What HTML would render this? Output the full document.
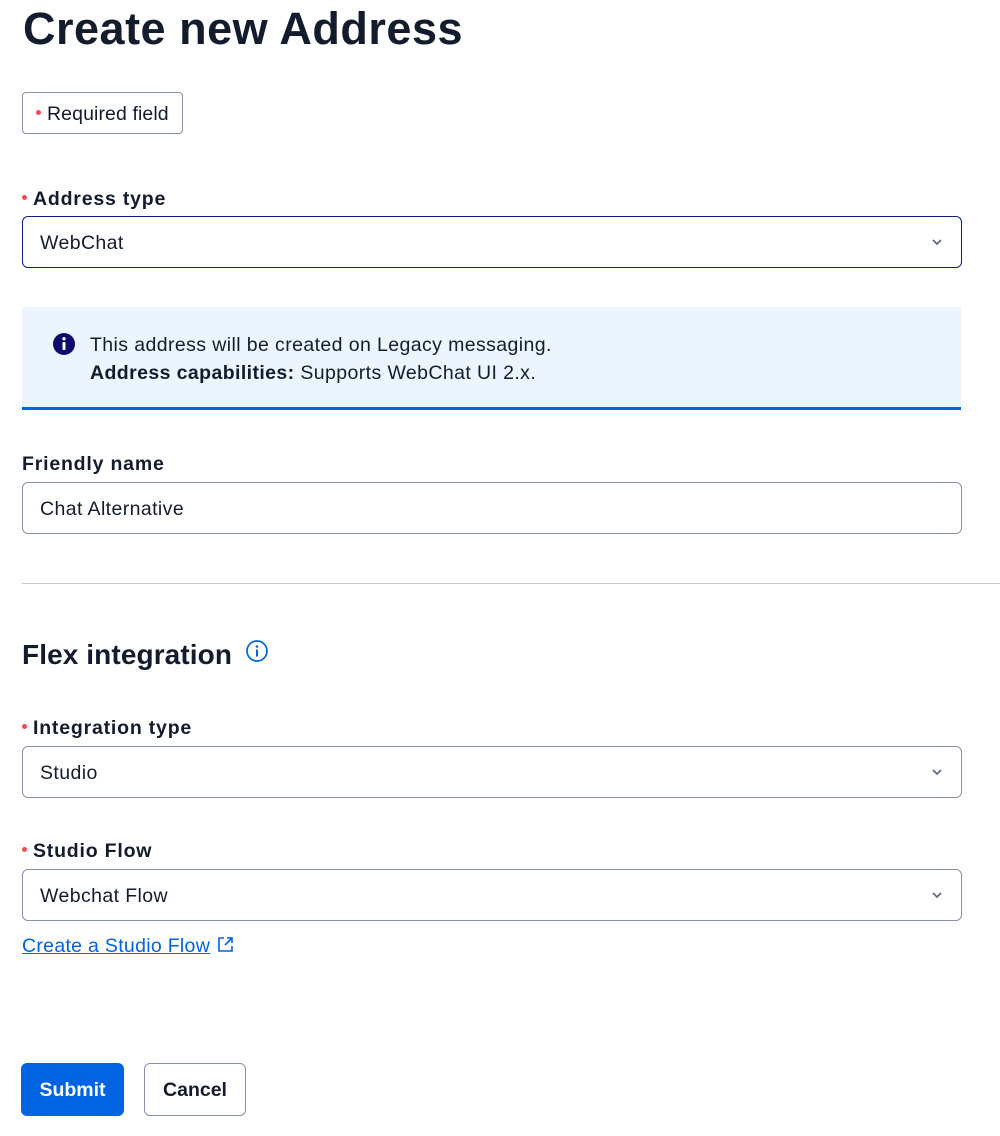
<!DOCTYPE html>
<html><head><meta charset="utf-8"><style>
body{margin:0;width:1000px;height:1136px;background:#fff;font-family:"Liberation Sans",Arial,sans-serif;color:#121c2d;position:relative;overflow:hidden}
.a{position:absolute}
h1{position:absolute;left:23px;top:3px;margin:0;font-size:45px;font-weight:bold;letter-spacing:0.5px;line-height:52px}
.lbl{position:absolute;left:22px;font-size:19.5px;font-weight:bold;line-height:24px;letter-spacing:0.8px}
.dot{display:inline-block;width:5px;height:5px;border-radius:50%;background:#eb4e4e;vertical-align:middle;margin-right:6px;position:relative;top:-2px}
.box{position:absolute;left:22px;width:938px;height:50px;border:1px solid #8891aa;border-radius:6px;box-sizing:content-box}
.box span{position:absolute;left:17px;top:14px;font-size:19.5px;line-height:24px;letter-spacing:0.4px}
.chev{position:absolute;right:18px;top:19px}
</style></head><body>
<h1>Create new Address</h1>
<div class="a" style="left:22px;top:92px;width:159px;height:40px;border:1px solid #8891aa;border-radius:4px;font-size:19.5px;line-height:42px;letter-spacing:0.1px;white-space:nowrap"><span class="dot" style="margin-left:13px;margin-right:6px"></span>Required field</div>

<div class="lbl" style="top:187px"><span class="dot" style="margin-left:0px;margin-right:6px"></span>Address type</div>
<div class="box" style="top:216px;border:1.5px solid #121c8a;"><span>WebChat</span>
<svg class="chev" width="12" height="12" viewBox="0 0 12 12"><path d="M2 4l4 4 4-4" fill="none" stroke="#606b85" stroke-width="1.8"/></svg></div>

<div class="a" style="left:22px;top:307px;width:939px;height:100px;background:#ebf4ff;border-bottom:3px solid #0263e0"></div>
<svg class="a" style="left:52px;top:332px" width="24" height="24" viewBox="0 0 24 24"><circle cx="12" cy="12" r="11" fill="#0d0a6b"/><rect x="10.5" y="10" width="3" height="8" rx="1" fill="#fff"/><circle cx="12" cy="6.8" r="1.7" fill="#fff"/></svg>
<div class="a" style="left:90px;top:331px;font-size:19.5px;line-height:28px;letter-spacing:0.4px">This address will be created on Legacy messaging.<br><b>Address capabilities:</b> Supports WebChat UI 2.x.</div>

<div class="lbl" style="top:452px">Friendly name</div>
<div class="box" style="top:482px"><span>Chat Alternative</span></div>

<div class="a" style="left:22px;top:583px;width:978px;height:1px;background:#cacdd8"></div>

<div class="a" style="left:22px;top:639px;font-size:28px;font-weight:bold;line-height:32px;letter-spacing:0.1px">Flex integration</div>
<svg class="a" style="left:245px;top:639px" width="24" height="24" viewBox="0 0 24 24"><circle cx="12" cy="12" r="10" fill="none" stroke="#0263e0" stroke-width="1.7"/><rect x="11" y="10.5" width="2" height="7" fill="#0263e0"/><circle cx="12" cy="7.5" r="1.3" fill="#0263e0"/></svg>

<div class="lbl" style="top:716px"><span class="dot" style="margin-left:0px;margin-right:6px"></span>Integration type</div>
<div class="box" style="top:746px"><span>Studio</span>
<svg class="chev" width="12" height="12" viewBox="0 0 12 12"><path d="M2 4l4 4 4-4" fill="none" stroke="#606b85" stroke-width="1.8"/></svg></div>

<div class="lbl" style="top:839px"><span class="dot" style="margin-left:0px;margin-right:6px"></span>Studio Flow</div>
<div class="box" style="top:869px"><span>Webchat Flow</span>
<svg class="chev" width="12" height="12" viewBox="0 0 12 12"><path d="M2 4l4 4 4-4" fill="none" stroke="#606b85" stroke-width="1.8"/></svg></div>

<div class="a" style="left:22px;top:934px;font-size:19.5px;line-height:24px;letter-spacing:0.3px;color:#0263e0;text-decoration:underline">Create a Studio Flow</div>
<svg class="a" style="left:217px;top:936px" width="17" height="17" viewBox="0 0 17 17"><path d="M7 2H2v13h13v-5M10 2h5v5M15 2L8 9" fill="none" stroke="#0263e0" stroke-width="1.6"/></svg>

<div class="a" style="left:21px;top:1063px;width:103px;height:53px;background:#0263e0;border-radius:6px;color:#fff;font-size:19.5px;font-weight:bold;line-height:55px;text-align:center">Submit</div>
<div class="a" style="left:144px;top:1063px;width:100px;height:51px;border:1px solid #8891aa;border-radius:6px;font-size:19.5px;font-weight:bold;line-height:53px;text-align:center">Cancel</div>
</body></html>
